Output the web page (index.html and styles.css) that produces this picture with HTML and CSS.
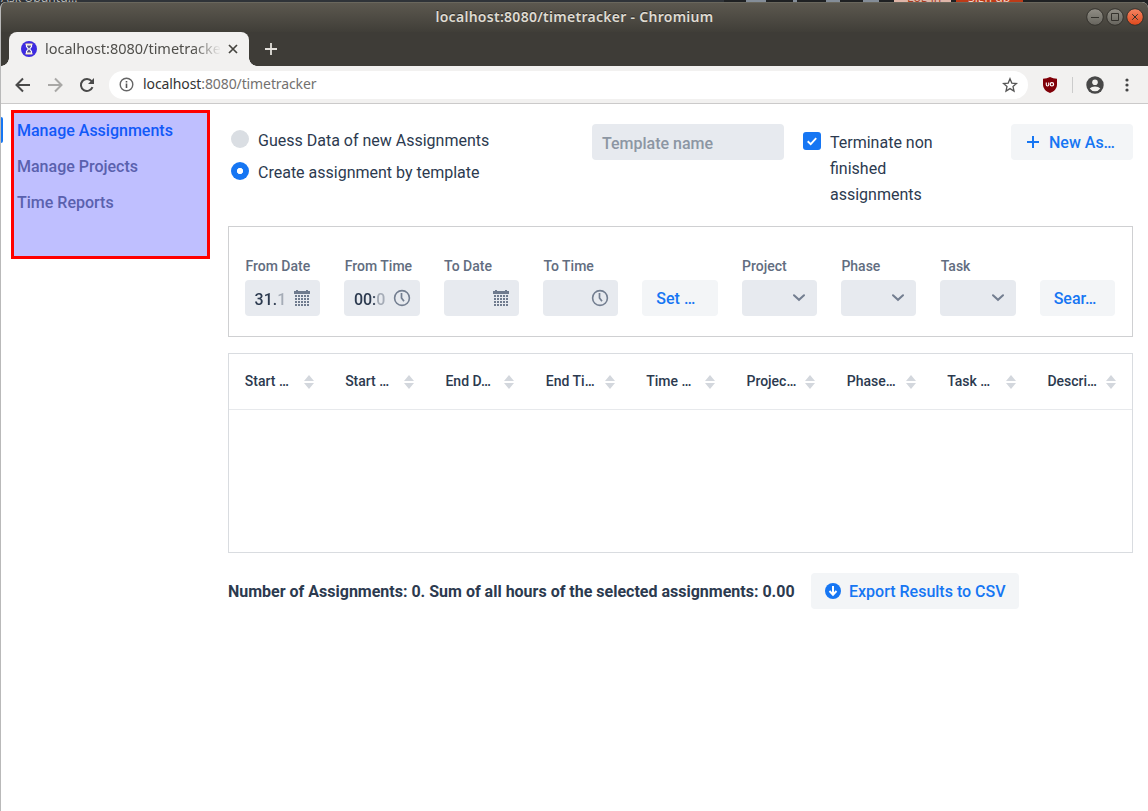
FILE: index.html
```html
<!DOCTYPE html>
<html lang="en">
<head>
<meta charset="utf-8">
<title>Timetracker</title>
<link rel="stylesheet" href="styles.css">
</head>
<body>
<svg class="defs" width="0" height="0">
  <symbol id="sort" viewBox="0 0 10 14"><path d="M0 6L5 0l5 6zM0 8h10l-5 6z" fill="#d3d7dd"/></symbol>
  <symbol id="calendar" viewBox="0 0 16 17"><path d="M0 1h2V0h2v1h8V0h2v1h2v3H0z" fill="#6f7b8e"/><path d="M1 6h14M1 9h14M1 12h14M1 15h14" stroke="#6f7b8e" stroke-width="2" stroke-dasharray="2 1"/></symbol>
  <symbol id="clock" viewBox="0 0 18 18"><circle cx="9" cy="9" r="7.4" fill="none" stroke="#737e90" stroke-width="1.6"/><path d="M8.5 4v5l2.5 3.2" fill="none" stroke="#737e90" stroke-width="1.7"/></symbol>
  <symbol id="chevron" viewBox="0 0 12 8"><path d="M1 1.2l5 4.6 5-4.6" fill="none" stroke="#737e90" stroke-width="2" stroke-linecap="round"/></symbol>
</svg>
<div class="backdrop">
  <span class="behind">Ask Ubuntu...</span>
  <i class="glyph g1"></i><i class="glyph g2"></i><i class="glyph g3"></i><i class="glyph g4"></i>
  <span class="login">Log in</span><span class="signup">Sign up</span>
</div>
<div class="window">
  <header class="titlebar">
    <div class="title">localhost:8080/timetracker - Chromium</div>
    <svg class="winbuttons" width="60" height="20" viewBox="0 0 60 20">
      <defs>
        <linearGradient id="gray" x2="0" y2="1"><stop stop-color="#918e86"/><stop offset="1" stop-color="#66645d"/></linearGradient>
        <linearGradient id="orange" x2="0" y2="1"><stop stop-color="#f58563"/><stop offset="1" stop-color="#df481b"/></linearGradient>
      </defs>
      <g stroke="#34322d"><circle cx="10" cy="10" r="8.3" fill="url(#gray)"/><circle cx="30" cy="10" r="8.3" fill="url(#gray)"/><circle cx="50" cy="10" r="8.3" fill="url(#orange)"/>
      <path d="M6 10.5h8M26.5 6.5h7v7h-7zM47.2 7.2l5.6 5.6M52.8 7.2l-5.6 5.6" fill="none"/></g>
    </svg>
  </header>
  <div class="tabs">
    <div class="tab">
      <svg width="16" height="16" viewBox="0 0 16 16"><circle cx="8" cy="8" r="8" fill="#3d2be0"/><path d="M4.500 3.300h7M4.500 12.700h7" stroke="#f4dca0" stroke-width="1.400"/><path d="M5.500 4v1.500L7.400 8l-1.900 2.500V12h5v-1.500L8.600 8l1.900-2.500V4z" fill="#55508a" stroke="#fff" stroke-width="1.200"/></svg>
      <span class="tabtitle">localhost:8080/timetracker</span>
      <svg class="tabclose" width="10" height="10" viewBox="0 0 10 10"><path d="M1 1l8 8M9 1L1 9" stroke="#45443f" stroke-width="1.7"/></svg>
    </div>
    <svg class="newtab" width="12" height="12" viewBox="0 0 12 12"><path d="M6 0v12M0 6h12" stroke="#e4e1dc" stroke-width="1.8"/></svg>
  </div>
  <div class="toolbar">
    <svg width="16" height="16" viewBox="0 0 16 16"><path d="M15 8H2M8 1.500L1.500 8 8 14.500" fill="none" stroke="#4a4a4a" stroke-width="2"/></svg>
    <svg width="16" height="16" viewBox="0 0 16 16"><path d="M1 8h13M8 1.500L14.500 8 8 14.500" fill="none" stroke="#a9a8a6" stroke-width="2"/></svg>
    <svg width="16" height="16" viewBox="0 0 16 16"><path d="M13.500 10.200A6 6 0 1 1 12.600 4.200" fill="none" stroke="#4a4a4a" stroke-width="2"/><path d="M15 1v6H9z" fill="#4a4a4a"/></svg>
    <div class="address">
      <svg width="15" height="15" viewBox="0 0 15 15"><circle cx="7.500" cy="7.500" r="6.300" fill="none" stroke="#666" stroke-width="1.400"/><path d="M7.500 6.600V11M7.500 4v1.500" stroke="#555" stroke-width="1.600"/></svg>
      <span class="url"><b>localhost</b>:8080/timetracker</span>
      <svg class="star" width="16" height="16" viewBox="0 0 16 16"><path d="M8 1.800l1.800 4.300 4.700.4L11 9.500l1 4.600-4-2.500-4 2.500 1-4.600-3.500-3 4.700-.4z" fill="none" stroke="#555" stroke-width="1.300"/></svg>
    </div>
    <svg class="shield" width="14" height="16" viewBox="0 0 14 16"><path d="M7 0q3 1.800 7 1.800V8q0 5-7 8Q0 13 0 8V1.800Q4 1.800 7 0z" fill="#800008"/><path d="M3.300 5.500v2.300q0 1.200 1.200 1.200t1.200-1.200V5.500" fill="none" stroke="#fff" stroke-width="1.100"/><circle cx="8.900" cy="7.300" r="1.700" fill="none" stroke="#fff" stroke-width="1.200"/></svg>
    <i class="divider"></i>
    <svg class="person" width="18" height="18" viewBox="0 0 18 18"><circle cx="9" cy="9" r="8.700" fill="#484848"/><circle cx="9" cy="6.300" r="2.800" fill="#f1f0ee"/><path d="M3.700 12.600Q5.500 10.600 9 10.600t5.300 2Q12.500 15.300 9 15.300t-5.300-2.700z" fill="#f1f0ee"/></svg>
    <svg class="dots" width="4" height="14" viewBox="0 0 4 14"><g fill="#444"><circle cx="2" cy="2" r="1.600"/><circle cx="2" cy="7" r="1.600"/><circle cx="2" cy="12" r="1.600"/></g></svg>
  </div>
  <div class="page">
    <i class="edge-marker"></i><i class="edge-text"></i><i class="edge-line"></i>
    <nav class="menu">
      <a class="current">Manage Assignments</a>
      <a>Manage Projects</a>
      <a>Time Reports</a>
    </nav>
    <main class="content">
      <section class="options">
        <div class="radios">
          <div class="radio"><i class="dot"></i>Guess Data of new Assignments</div>
          <div class="radio"><i class="dot on"></i>Create assignment by template</div>
        </div>
        <div class="template">Template name</div>
        <div class="terminate">
          <svg width="18" height="18" viewBox="0 0 18 18"><rect width="18" height="18" rx="3" fill="#1676f3"/><path d="M4.700 9.200l3 2.900 5.500-6" fill="none" stroke="#fff" stroke-width="1.900"/></svg>
          <span>Terminate non finished assignments</span>
        </div>
        <div class="button new"><svg width="12" height="12" viewBox="0 0 12 12"><path d="M6 0v12M0 6h12" stroke="#1676f3" stroke-width="2"/></svg><span>New As…</span></div>
      </section>
      <section class="filters">
        <div class="field"><label>From Date</label><div class="input"><span class="value">31.1</span><svg class="cal" width="16" height="17"><use href="#calendar"/></svg></div></div>
        <div class="field"><label>From Time</label><div class="input"><span class="value">00:0</span><svg class="clk" width="18" height="18"><use href="#clock"/></svg></div></div>
        <div class="field"><label>To Date</label><div class="input"><svg class="cal" width="16" height="17"><use href="#calendar"/></svg></div></div>
        <div class="field"><label>To Time</label><div class="input"><svg class="clk" width="18" height="18"><use href="#clock"/></svg></div></div>
        <div class="button"><span>Set …</span></div>
        <div class="field"><label>Project</label><div class="input"><svg class="chev" width="12" height="8"><use href="#chevron"/></svg></div></div>
        <div class="field"><label>Phase</label><div class="input"><svg class="chev" width="12" height="8"><use href="#chevron"/></svg></div></div>
        <div class="field"><label>Task</label><div class="input"><svg class="chev" width="12" height="8"><use href="#chevron"/></svg></div></div>
        <div class="button"><span>Sear…</span></div>
      </section>
      <section class="grid">
        <div class="gridhead">
          <div class="col"><span>Start …</span><svg width="10" height="14"><use href="#sort"/></svg></div>
          <div class="col"><span>Start …</span><svg width="10" height="14"><use href="#sort"/></svg></div>
          <div class="col"><span>End D…</span><svg width="10" height="14"><use href="#sort"/></svg></div>
          <div class="col"><span>End Ti…</span><svg width="10" height="14"><use href="#sort"/></svg></div>
          <div class="col"><span>Time …</span><svg width="10" height="14"><use href="#sort"/></svg></div>
          <div class="col"><span>Projec…</span><svg width="10" height="14"><use href="#sort"/></svg></div>
          <div class="col"><span>Phase…</span><svg width="10" height="14"><use href="#sort"/></svg></div>
          <div class="col"><span>Task …</span><svg width="10" height="14"><use href="#sort"/></svg></div>
          <div class="col"><span>Descri…</span><svg width="10" height="14"><use href="#sort"/></svg></div>
        </div>
      </section>
      <footer class="summary">
        <span class="totals">Number of Assignments: 0. Sum of all hours of the selected assignments: 0.00</span>
        <div class="button export"><svg width="16" height="16" viewBox="0 0 16 16"><circle cx="8" cy="8" r="8" fill="#1676f3"/><path d="M8 3v8.500M4.500 8L8 11.700 11.500 8" fill="none" stroke="#fff" stroke-width="2"/></svg><span>Export Results to CSV</span></div>
      </footer>
    </main>
  </div>
</div>
</body>
</html>
```

FILE: styles.css
```css
* { box-sizing: border-box; }
body { margin: 0; width: 1148px; height: 811px; overflow: hidden; position: relative; background: #2d3034; font: 16px/26px Roboto, sans-serif; color: #2c3a4f; }
svg { display: block; flex: none; }
.defs { position: absolute; }
.backdrop { position: absolute; inset: 0 0 auto 0; height: 22px; background: linear-gradient(90deg, #2f3338 724px, #1f2123 724px); font: 12.300px/14px "Open Sans", sans-serif; color: #bbb; }
.behind, .login, .signup, .glyph { position: absolute; top: -9px; height: 11px; white-space: nowrap; }
.behind { left: 1px; }
.login { left: 894px; width: 57px; padding-left: 13px; background: #dfb5a8; color: #a33a20; }
.signup { left: 956px; width: 67px; padding-left: 12px; background: #bd3b18; color: #f2d4ca; }
.glyph { background: #848d98; }
.g1 { left: 746px; width: 20px; }
.g2 { left: 793px; width: 4px; }
.g3 { left: 826px; width: 14px; }
.g4 { left: 863px; width: 16px; }
.window { position: relative; margin-top: 2px; height: 809px; display: flex; flex-direction: column; border-left: 1px solid #b9b9b9; border-radius: 6px 6px 0 0; overflow: hidden; background: #fff; }
.titlebar { height: 30px; display: flex; align-items: center; justify-content: center; position: relative; background: linear-gradient(#5c584f, #403e38); border-top: 1px solid #6a675d; }
.title { font: 600 14px/20px "Noto Sans", sans-serif; letter-spacing: .28px; color: #dfdbd2; text-shadow: 0 -1px #292824; white-space: nowrap; padding-bottom: 2px; }
.winbuttons { position: absolute; right: 3px; top: 4px; }
.tabs { height: 34px; display: flex; background: #3e3c37; padding-left: 8px; }
.tab { position: relative; width: 240px; height: 34px; border-radius: 8px 8px 0 0; background: #f2f1f0; display: flex; align-items: center; padding-left: 12px; }
.tab::before, .tab::after { content: ""; position: absolute; bottom: 0; width: 8px; height: 8px; }
.tab::before { left: -8px; background: radial-gradient(circle at 0 0, #3e3c37 7.500px, #f2f1f0 8px); }
.tab::after { right: -8px; background: radial-gradient(circle at 100% 0, #3e3c37 7.500px, #f2f1f0 8px); }
.tabtitle { font: 14.500px/20px "Noto Sans", sans-serif; letter-spacing: -.02px; color: #504f4b; margin-left: 8px; padding-bottom: 2px; width: 176px; overflow: hidden; white-space: nowrap; mask-image: linear-gradient(90deg, #000 148px, transparent 176px); }
.tabclose { margin-left: 7px; }
.newtab { margin: 11px 0 0 16px; }
.toolbar { height: 38px; background: #f2f1f0; border-bottom: 1px solid #cbcaca; display: flex; align-items: center; padding-left: 14px; gap: 16px; }
.address { width: 919px; height: 28px; margin-left: -2px; border-radius: 14px; background: #fff; display: flex; align-items: center; padding: 0 10px; }
.url { margin-left: 9px; padding-bottom: 2px; font: 14px/20px "Noto Sans", sans-serif; letter-spacing: -.1px; color: #73716f; }
.url b { font-weight: 400; color: #333; }
.star { margin-left: auto; }
.shield { margin-left: -1px; }
.divider { width: 1px; height: 16px; background: #ccc; margin-left: -1px; }
.person { margin-left: -3px; }
.dots { margin-left: 5px; }
.page { position: relative; flex: 1; display: flex; align-items: flex-start; gap: 18px; padding: 6px 15px 0 10px; }
.edge-marker, .edge-text, .edge-line { position: absolute; left: 0; width: 2px; }
.edge-marker { top: 13px; height: 26px; background: #1676f3; border-radius: 0 2px 2px 0; }
.edge-text { left: -1px; width: 1px; top: 105px; height: 6px; background: #35415a; }
.edge-line { left: -1px; width: 1px; top: 135px; height: 1px; background: #888; }
.menu { width: 199px; height: 149px; border: 3px solid #f00; background: #bfbfff; padding: 5px 3px; font-weight: 500; flex: none; }
.menu a { display: block; height: 36px; line-height: 26px; color: #5a61ae; }
.menu .current { color: #1259f8; }
.content { width: 905px; padding-top: 14px; }
.options { height: 102px; display: flex; align-items: flex-start; }
.radios { width: 364px; padding: 4px 0 0 3px; }
.radio { height: 32px; display: flex; align-items: flex-start; gap: 9px; }
.dot { width: 18px; height: 18px; border-radius: 50%; background: #dadee3; margin-top: 2px; }
.dot.on { background: radial-gradient(circle, #fff 2.800px, #1676f3 3.400px); }
.template { width: 192px; height: 36px; border-radius: 4px; background: #e7eaef; color: #8c96a3; font-weight: 500; padding: 7px 10px 0; }
.terminate { width: 190px; display: flex; margin-left: 19px; padding-top: 6px; gap: 9px; }
.terminate svg { margin-top: 2px; }
.terminate span { width: 120px; }
.button { height: 36px; border-radius: 4px; background: #f3f5f7; color: #1676f3; font-weight: 500; padding: 0 14px; display: flex; align-items: center; white-space: nowrap; }
.button span { padding-top: 2px; }
.new { width: 122px; margin-left: auto; gap: 10px; padding-left: 16px; }
.filters { height: 111px; border: 1px solid #cfd0d2; padding: 0 17px 20px 16px; display: grid; grid-template-columns: repeat(9, minmax(0, 1fr)); gap: 24px; align-items: end; }
.field label { display: block; font-weight: 500; font-size: 14px; line-height: 18px; margin-bottom: 5px; color: #626d80; padding-left: .4px; white-space: nowrap; }
.input { height: 36px; border-radius: 4px; background: #e7eaef; display: flex; align-items: center; padding: 0 10px 0 9.600px; }
.input svg { margin-left: auto; }
.value { width: 32px; font-weight: 500; overflow: hidden; padding-top: 3px; mask-image: linear-gradient(90deg, #000 20px, rgba(0,0,0,.35) 23px, rgba(0,0,0,.35) 30px); }
.input .clk { margin-right: -1px; }
.input .chev { margin-right: 2px; }
.grid { margin-top: 16px; height: 200px; border: 1px solid #d9dce0; }
.gridhead { height: 56px; display: grid; grid-template-columns: repeat(9, 1fr); border-bottom: 1px solid #e7e9ec; }
.col { display: flex; align-items: center; justify-content: space-between; padding: 0 15.600px 0 15.800px; font-size: 14px; font-weight: 500; white-space: nowrap; }
.col span { padding-bottom: 2px; }
.col svg { margin-top: 1px; }
.summary { display: flex; align-items: center; margin-top: 20px; }
.totals { width: 583px; padding-top: 2px; font-weight: 700; white-space: nowrap; }
.export { width: 208px; gap: 8px; }
```
